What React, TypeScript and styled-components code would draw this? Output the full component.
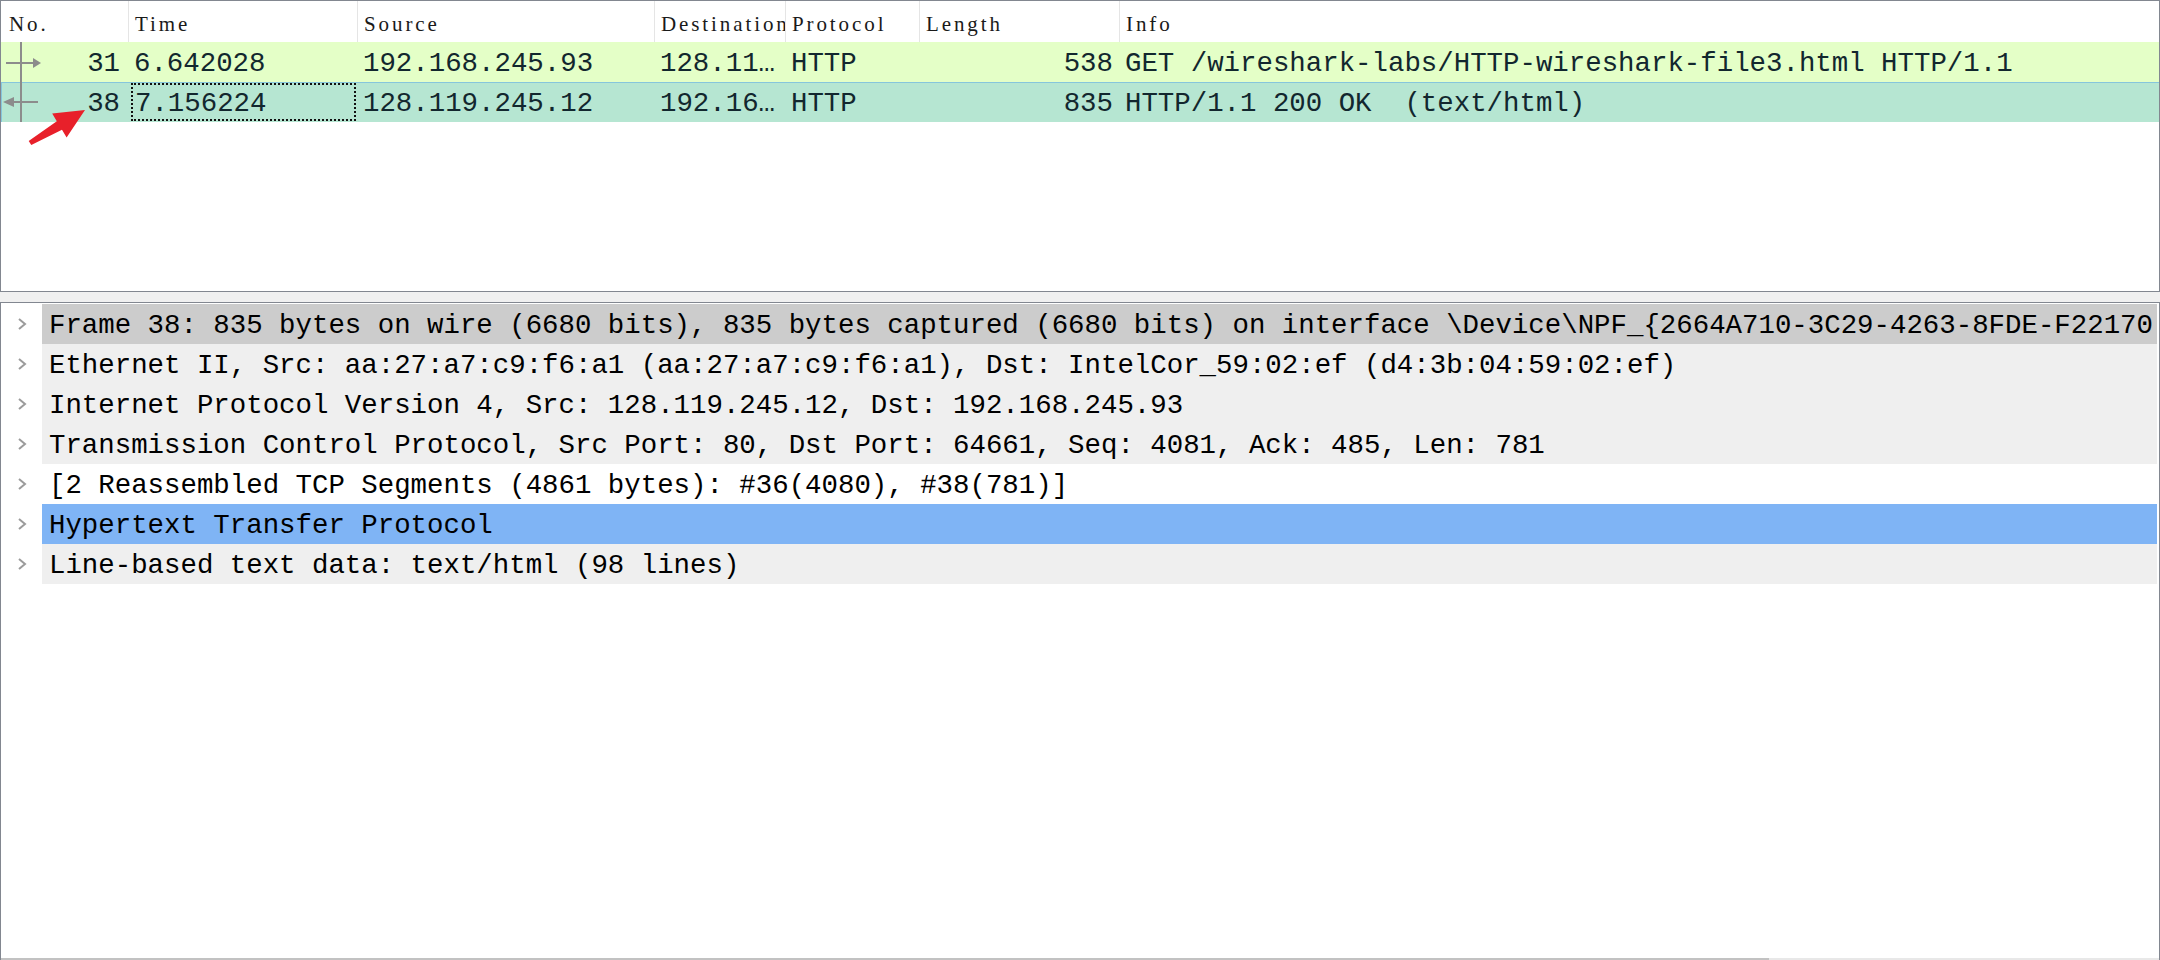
import React from 'react';
import styled, { createGlobalStyle } from 'styled-components';

const GlobalStyle = createGlobalStyle`
  html, body {
    margin: 0;
    padding: 0;
    background: #f0f0f0;
    overflow: hidden;
  }
  * {
    box-sizing: border-box;
  }
`;

const LIST_COLUMNS = '127px 229px 297px 131px 134px 200px 1fr';
const MONO = '"Liberation Mono", "DejaVu Sans Mono", monospace';

const Window = styled.div`
  width: 2160px;
  height: 960px;
  display: flex;
  flex-direction: column;
  background: #f0f0f0;
`;

const PacketPane = styled.div`
  position: relative;
  height: 292px;
  flex-shrink: 0;
  background: #ffffff;
  border: 1px solid #828790;
`;

const Splitter = styled.div`
  height: 10px;
  flex-shrink: 0;
  background: #f0f0f0;
`;

const DetailPane = styled.div`
  flex: 1;
  display: flex;
  flex-direction: column;
  background: #ffffff;
  border: 1px solid #828790;
  border-bottom: none;
  padding-top: 1px;
  min-height: 0;
`;

const ListHeader = styled.div`
  display: grid;
  grid-template-columns: ${LIST_COLUMNS};
  height: 41px;
  background: #ffffff;
`;

const HeaderCell = styled.div<{ $first?: boolean }>`
  display: flex;
  align-items: center;
  padding: 5px 0 0 ${({ $first }) => ($first ? '8px' : '6px')};
  border-left: ${({ $first }) => ($first ? 'none' : '1px solid #e5e5e5')};
  font-family: "Liberation Serif", "DejaVu Serif", serif;
  font-size: 21px;
  letter-spacing: 2.9px;
  color: #1a1a1a;
  white-space: nowrap;
  overflow: hidden;
`;

const PacketRow = styled.div<{ $bg: string; $selected?: boolean }>`
  display: grid;
  grid-template-columns: ${LIST_COLUMNS};
  height: 40px;
  background: ${({ $bg }) => $bg};
  box-shadow: ${({ $selected }) => ($selected ? 'inset 1px 1px 0 #86c6dc' : 'none')};
  font-family: ${MONO};
  font-size: 27.4px;
  color: #12272e;
`;

const Cell = styled.div<{ $right?: boolean; $focused?: boolean }>`
  display: flex;
  align-items: center;
  justify-content: ${({ $right }) => ($right ? 'flex-end' : 'flex-start')};
  padding: 2px ${({ $right }) => ($right ? '6px' : '0')} 0 ${({ $focused }) => ($focused ? '2px' : '6px')};
  margin: ${({ $focused }) => ($focused ? '1px 1px 1px 3px' : '0')};
  border: ${({ $focused }) => ($focused ? '2px dotted #111111' : 'none')};
  white-space: pre;
  overflow: hidden;
`;

const NumberCell = styled.div`
  display: flex;
  align-items: center;
  padding: 2px 8px 0 0;
  white-space: pre;
`;

const NumberText = styled.span`
  margin-left: auto;
`;

const RelationSvg = styled.svg`
  flex-shrink: 0;
  display: block;
  align-self: stretch;
  margin-top: -2px;
`;

const Pointer = styled.svg`
  position: absolute;
  left: -1px;
  top: -1px;
  pointer-events: none;
`;

const TreeRow = styled.div`
  display: grid;
  grid-template-columns: 41px 1fr;
  height: 40px;
  flex-shrink: 0;
`;

const Expander = styled.div`
  display: flex;
  align-items: center;
  padding-left: 16px;
`;

const TreeLabel = styled.div<{ $bg: string }>`
  display: flex;
  align-items: center;
  margin-right: 2px;
  padding: 2px 0 0 7px;
  background: ${({ $bg }) => $bg};
  font-family: ${MONO};
  font-size: 27.4px;
  color: #000000;
  white-space: pre;
  overflow: hidden;
`;

const Filler = styled.div`
  flex: 1;
`;

const ScrollTrack = styled.div`
  height: 2px;
  display: flex;
  background: #e8e8e8;
`;

const ScrollThumb = styled.div<{ $width: number }>`
  width: ${({ $width }) => $width}px;
  background: #c2c2c2;
`;

type Direction = 'request' | 'response';

const RelationMark = ({ direction }: { direction: Direction }) => (
  <RelationSvg width="44" height="40" viewBox="0 0 44 40">
    <line x1="20" y1="0" x2="20" y2="40" stroke="#8c8c8c" strokeWidth="2" />
    {direction === 'request' ? (
      <>
        <line x1="5" y1="21" x2="33" y2="21" stroke="#8c8c8c" strokeWidth="2" />
        <polygon points="32,16 40,21 32,26" fill="#8c8c8c" />
      </>
    ) : (
      <>
        <line x1="13" y1="20" x2="37" y2="20" stroke="#8c8c8c" strokeWidth="2" />
        <polygon points="2,20 13,15 13,25" fill="#8c8c8c" />
      </>
    )}
  </RelationSvg>
);

const Chevron = () => (
  <svg width="10" height="14" viewBox="0 0 10 14">
    <polyline points="2,2 8,7 2,12" fill="none" stroke="#9b9b9b" strokeWidth="2" />
  </svg>
);

interface Packet {
  no: string;
  time: string;
  source: string;
  destination: string;
  protocol: string;
  length: string;
  info: string;
  bg: string;
  direction: Direction;
  selected?: boolean;
}

const packets: Packet[] = [
  {
    no: '31',
    time: '6.642028',
    source: '192.168.245.93',
    destination: '128.11…',
    protocol: 'HTTP',
    length: '538',
    info: 'GET /wireshark-labs/HTTP-wireshark-file3.html HTTP/1.1',
    bg: '#e4ffc7',
    direction: 'request',
  },
  {
    no: '38',
    time: '7.156224',
    source: '128.119.245.12',
    destination: '192.16…',
    protocol: 'HTTP',
    length: '835',
    info: 'HTTP/1.1 200 OK  (text/html)',
    bg: '#b6e6d2',
    direction: 'response',
    selected: true,
  },
];

const treeItems = [
  {
    label:
      'Frame 38: 835 bytes on wire (6680 bits), 835 bytes captured (6680 bits) on interface \\Device\\NPF_{2664A710-3C29-4263-8FDE-F22170',
    bg: '#cccccc',
  },
  {
    label:
      'Ethernet II, Src: aa:27:a7:c9:f6:a1 (aa:27:a7:c9:f6:a1), Dst: IntelCor_59:02:ef (d4:3b:04:59:02:ef)',
    bg: '#efefef',
  },
  { label: 'Internet Protocol Version 4, Src: 128.119.245.12, Dst: 192.168.245.93', bg: '#efefef' },
  {
    label: 'Transmission Control Protocol, Src Port: 80, Dst Port: 64661, Seq: 4081, Ack: 485, Len: 781',
    bg: '#efefef',
  },
  { label: '[2 Reassembled TCP Segments (4861 bytes): #36(4080), #38(781)]', bg: '#ffffff' },
  { label: 'Hypertext Transfer Protocol', bg: '#7fb4f5' },
  { label: 'Line-based text data: text/html (98 lines)', bg: '#efefef' },
];

const headers = ['No.', 'Time', 'Source', 'Destination', 'Protocol', 'Length', 'Info'];

export default function App() {
  return (
    <>
      <GlobalStyle />
      <Window>
        <PacketPane>
          <ListHeader>
            {headers.map((h, i) => (
              <HeaderCell key={h} $first={i === 0}>
                {h}
              </HeaderCell>
            ))}
          </ListHeader>
          {packets.map((p) => (
            <PacketRow key={p.no} $bg={p.bg} $selected={p.selected}>
              <NumberCell>
                <RelationMark direction={p.direction} />
                <NumberText>{p.no}</NumberText>
              </NumberCell>
              <Cell $focused={p.selected}>{p.time}</Cell>
              <Cell>{p.source}</Cell>
              <Cell>{p.destination}</Cell>
              <Cell>{p.protocol}</Cell>
              <Cell $right>{p.length}</Cell>
              <Cell>{p.info}</Cell>
            </PacketRow>
          ))}
          <Pointer width="100" height="160" viewBox="0 0 100 160">
            <polygon
              points="85,110 66.6,137.5 62,129.8 31.3,145.1 28.7,140.9 56.8,121.2 52.2,113.5"
              fill="#e8202a"
            />
          </Pointer>
        </PacketPane>
        <Splitter />
        <DetailPane>
          {treeItems.map((item) => (
            <TreeRow key={item.label}>
              <Expander>
                <Chevron />
              </Expander>
              <TreeLabel $bg={item.bg}>{item.label}</TreeLabel>
            </TreeRow>
          ))}
          <Filler />
          <ScrollTrack>
            <ScrollThumb $width={1768} />
          </ScrollTrack>
        </DetailPane>
      </Window>
    </>
  );
}
